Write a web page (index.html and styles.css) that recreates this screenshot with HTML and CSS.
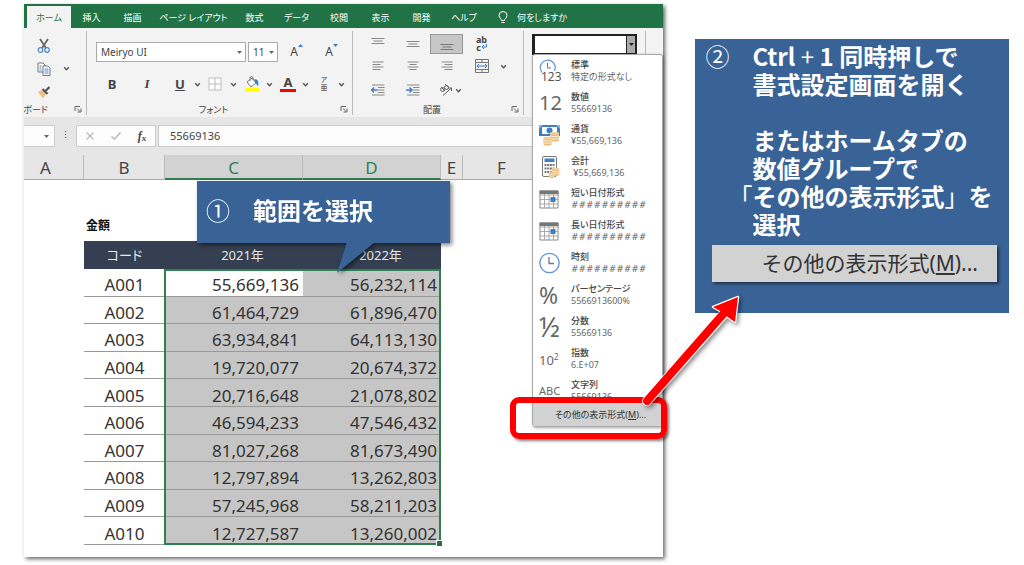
FILE: index.html
```
<!DOCTYPE html>
<html lang="ja">
<head>
<meta charset="utf-8">
<title>表示形式の設定</title>
<link rel="stylesheet" href="styles.css">
</head>
<body>
<svg width="0" height="0" class="defs" aria-hidden="true">
  <symbol id="chev" viewBox="0 0 6 6"><path d="M1 2l2 2 2-2" fill="none" stroke="#555" stroke-width="1.2"/></symbol>
  <symbol id="launch" viewBox="0 0 8 8"><path d="M1 6V1.5h5M3 3.500l3 3M7 3.500V7H3.500" fill="none" stroke="#666"/></symbol>
  <symbol id="coins" viewBox="0 0 12 12"><path d="M1 2v7c0 2 9 2 9 0V2z" fill="#e9be7c"/><path d="M1 4.500c1 1.500 8 1.500 9 0M1 7c1 1.500 8 1.500 9 0" stroke="#fff" fill="none" stroke-width=".8"/><ellipse cx="5.500" cy="2.200" rx="4.500" ry="1.500" fill="#f0cf9a"/></symbol>
  <symbol id="cal" viewBox="0 0 20 19"><path d="M1 1h18v17H1z" fill="#fff" stroke="#888"/><path d="M1 5h18M1 9.500h18M1 14h18M5.500 4v14M10 4v14M14.500 4v14" stroke="#aaa"/><path d="M.5.500h19V4H.5z" fill="#777"/><path d="M11.500 7h5v5h-5z" fill="#3f7fc1"/></symbol>
</svg>
<main class="slide">
  <section class="window">
    <nav class="tabs">
      <button class="tab tab-on">ホーム</button>
      <button class="tab">挿入</button>
      <button class="tab">描画</button>
      <button class="tab">ページ レイアウト</button>
      <button class="tab">数式</button>
      <button class="tab">データ</button>
      <button class="tab">校閲</button>
      <button class="tab">表示</button>
      <button class="tab">開発</button>
      <button class="tab">ヘルプ</button>
      <button class="tab tell"><svg width="10" height="13" viewBox="0 0 10 13"><path d="M3.500 9.500C3.500 7.500 1 7 1 4.500a4 4 0 0 1 8 0C9 7 6.500 7.500 6.500 9.500zM3.500 11.500h3" fill="none" stroke="#fff"/></svg>何をしますか</button>
    </nav>

    <div class="ribbon">
      <div class="group group-clip">
        <div class="clip-body">
          <button class="tool" aria-label="切り取り"><svg width="14" height="16" viewBox="0 0 14 16"><path d="M3 1l6 9M11 1L5 10" stroke="#666" stroke-width="1.800" fill="none"/><circle cx="3.500" cy="12" r="2.300" fill="none" stroke="#4a86c5" stroke-width="1.200"/><circle cx="10" cy="12" r="2.300" fill="none" stroke="#4a86c5" stroke-width="1.200"/></svg></button><span></span>
          <button class="tool" aria-label="コピー"><svg width="14" height="14" viewBox="0 0 14 14"><path d="M1 1h5l2 2v7H1z" fill="#fff" stroke="#777"/><path d="M6 4h5l2 2v7.500H6z" fill="#fff" stroke="#777"/><path d="M2.500 4h2M2.500 6h2M2.500 8h2M7.500 7h4M7.500 9h4M7.500 11h4" stroke="#4a86c5"/></svg></button><button class="tool" aria-label="コピーの種類"><svg width="7" height="7"><use href="#chev"/></svg></button>
          <button class="tool" aria-label="書式のコピー"><svg width="14" height="14" viewBox="0 0 14 14"><path d="M1 7l4-2 4 4-3 4.500z" fill="#edc184"/><path d="M5.500 4l5 5M8 6.500L12.500 2" stroke="#555" stroke-width="2.200"/></svg></button><span></span>
        </div>
        <footer class="group-foot"><span class="cut">プボード</span><button class="launch" aria-label="詳細"><svg width="8" height="8"><use href="#launch"/></svg></button></footer>
      </div>

      <div class="group group-font">
        <div class="font-body">
          <div class="font-row">
            <select class="combo combo-font" aria-label="フォント"><option>Meiryo UI</option></select>
            <select class="combo combo-size" aria-label="サイズ"><option>11</option></select>
            <button class="tool grow">A<svg width="5" height="4" viewBox="0 0 5 4"><path d="M0 3l2.500-3L5 3z" fill="#3f7fc1"/></svg></button>
            <button class="tool grow">A<svg width="5" height="4" viewBox="0 0 5 4"><path d="M0 0l2.500 3L5 0z" fill="#3f7fc1"/></svg></button>
          </div>
          <div class="font-row font-row2">
            <button class="tool letter">B</button>
            <button class="tool letter italic">I</button>
            <button class="tool split"><span class="letter under">U</span><svg width="7" height="7"><use href="#chev"/></svg></button>
            <button class="tool split" aria-label="罫線"><svg width="14" height="14" viewBox="0 0 14 14"><path d="M1 1h12v12H1zM7 1v12M1 7h12" fill="#fff" stroke="#bbb"/></svg><svg width="7" height="7"><use href="#chev"/></svg></button>
            <button class="tool split" aria-label="塗りつぶし"><svg width="16" height="16" viewBox="0 0 16 16"><path d="M3 6l5-4 4 5-5 4z" fill="#fff" stroke="#777"/><path d="M6 5V2a1.500 1.500 0 0 1 3 0v2" fill="none" stroke="#777"/><path d="M10 3.500c4-1 5 3 4 7l-2-3z" fill="#3f7fc1"/><path d="M1 12h14v3.500H1z" fill="#ff0"/></svg><svg width="7" height="7"><use href="#chev"/></svg></button>
            <button class="tool split" aria-label="フォントの色"><span class="letter color">A</span><svg width="7" height="7"><use href="#chev"/></svg></button>
            <button class="tool split" aria-label="ふりがな"><span class="ruby"><span>ア</span><span>亜</span></span><svg width="7" height="7"><use href="#chev"/></svg></button>
          </div>
        </div>
        <footer class="group-foot"><span class="group-name">フォント</span><button class="launch" aria-label="詳細"><svg width="8" height="8"><use href="#launch"/></svg></button></footer>
      </div>

      <div class="group group-align">
        <div class="align-body">
          <button class="tool" aria-label="上揃え"><svg width="14" height="14" viewBox="0 0 14 14"><path d="M.5 1.500h13M2.500 4h9M.5 6.500h13" stroke="#888"/></svg></button>
          <button class="tool" aria-label="上下中央"><svg width="14" height="14" viewBox="0 0 14 14"><path d="M.5 4.500h13M2.500 7h9M.5 9.500h13" stroke="#888"/></svg></button>
          <button class="tool pressed" aria-label="下揃え"><svg width="14" height="14" viewBox="0 0 14 14"><path d="M.5 7.500h13M2.500 10h9M.5 12.500h13" stroke="#777"/></svg></button>
          <button class="tool wrap" aria-label="折り返し"><span>ab</span><span>c<svg width="6" height="6" viewBox="0 0 6 6"><path d="M5.500 0v3H1M3 1L1 3l2 2" fill="none" stroke="#3f7fc1"/></svg></span></button><span></span>
          <button class="tool" aria-label="左揃え"><svg width="12" height="10" viewBox="0 0 12 10"><path d="M.5 1h11M.5 3.500h8M.5 6h11M.5 8.500h8" stroke="#888"/></svg></button>
          <button class="tool" aria-label="中央揃え"><svg width="12" height="10" viewBox="0 0 12 10"><path d="M.5 1h11M2.500 3.500h7M.5 6h11M2.500 8.500h7" stroke="#888"/></svg></button>
          <button class="tool" aria-label="右揃え"><svg width="12" height="10" viewBox="0 0 12 10"><path d="M.5 1h11M3.500 3.500h8M.5 6h11M3.500 8.500h8" stroke="#888"/></svg></button>
          <button class="tool" aria-label="セルを結合"><svg width="14" height="14" viewBox="0 0 14 14"><path d="M.5.500h13v13H.5zM.5 3.500h13M.5 10.500h13M7 .5v3M7 10.500v3" fill="none" stroke="#777"/><path d="M2 7h10M4 5L2 7l2 2M10 5l2 2-2 2" fill="none" stroke="#3f7fc1"/></svg></button>
          <button class="tool" aria-label="結合の種類"><svg width="7" height="7"><use href="#chev"/></svg></button>
          <button class="tool" aria-label="インデントを減らす"><svg width="14" height="12" viewBox="0 0 14 12"><path d="M1 1h12.500M7 3.500h6.500M7 6h6.500M7 8.500h6.500M1 11h12.500" stroke="#888"/><path d="M.5 6h6M3 3.500L.5 6 3 8.500" fill="none" stroke="#3f7fc1" stroke-width="1.500"/></svg></button>
          <button class="tool" aria-label="インデントを増やす"><svg width="14" height="12" viewBox="0 0 14 12"><path d="M1 1h12.500M7 3.500h6.500M7 6h6.500M7 8.500h6.500M1 11h12.500" stroke="#888"/><path d="M0 6h6M3.500 3.500L6 6 3.500 8.500" fill="none" stroke="#3f7fc1" stroke-width="1.500"/></svg></button>
          <button class="tool orient" aria-label="方向"><svg width="14" height="14" viewBox="0 0 14 14"><g fill="none" stroke="#666"><circle cx="3.500" cy="6.500" r="2"/><path d="M2 4l4 4M6 1l4 4"/><circle cx="7.500" cy="4.500" r="2"/><path d="M4 12.500L12.500 5M9.500 5h3v3"/></g></svg><svg width="7" height="7"><use href="#chev"/></svg></button>
        </div>
        <footer class="group-foot"><span class="group-name">配置</span><button class="launch" aria-label="詳細"><svg width="8" height="8"><use href="#launch"/></svg></button></footer>
      </div>

      <div class="group group-number">
        <div class="format-box"><input class="format-input" type="text" aria-label="表示形式"><button class="format-arrow" aria-label="一覧を開く"></button></div>
        <div class="menu">
          <ul class="menu-list">
            <li class="item"><svg width="22" height="24" viewBox="0 0 22 24"><path d="M3 13.500A7.500 7.500 0 1 1 15.500 12" fill="none" stroke="#5b94cf" stroke-width="1.200"/><path d="M8.500 4v5H12" fill="none" stroke="#777"/><text x="2" y="22" class="t123">123</text></svg><span><b>標準</b>特定の形式なし</span></li>
            <li class="item"><span class="glyph">12</span><span><b>数値</b>55669136</span></li>
            <li class="item"><svg width="22" height="22" viewBox="0 0 22 22"><path d="M0 1h21v11H0z" fill="#3f7fc1"/><path d="M3 3h15v7H3z" fill="#fff"/><path d="M0 1h4L0 5zM21 1h-4l4 4z" fill="#8fb5de"/><circle cx="10.500" cy="6.500" r="3" fill="#3f7fc1"/><use href="#coins" x="10" y="7" width="12" height="12"/><use href="#coins" x="3" y="12" width="12" height="11"/></svg><span><b>通貨</b>¥55,669,136</span></li>
            <li class="item"><svg width="22" height="24" viewBox="0 0 22 24"><rect x="3.500" y="1.500" width="14" height="20" rx="1.500" fill="#fff" stroke="#777"/><path d="M5.500 3.500h10V7h-10z" fill="#3f7fc1"/><path d="M5.500 10h10M5.500 13.500h10M5.500 17h10" stroke="#777" stroke-width="2" stroke-dasharray="2 .7"/><use href="#coins" x="12" y="12" width="10" height="10"/><use href="#coins" x="8" y="16" width="10" height="8"/></svg><span><b>会計</b>&nbsp;¥55,669,136</span></li>
            <li class="item"><svg width="20" height="19"><use href="#cal"/></svg><span><b>短い日付形式</b><i>##########</i></span></li>
            <li class="item"><svg width="20" height="19"><use href="#cal"/></svg><span><b>長い日付形式</b><i>##########</i></span></li>
            <li class="item"><svg width="22" height="22" viewBox="0 0 22 22"><circle cx="10.500" cy="11" r="9.700" fill="#fff" stroke="#5b94cf" stroke-width="1.300"/><path d="M10 5v6.500h5" fill="none" stroke="#777" stroke-width="1.300"/></svg><span><b>時刻</b><i>##########</i></span></li>
            <li class="item"><span class="glyph glyph-pc">%</span><span><b>パーセンテージ</b>5566913600%</span></li>
            <li class="item"><span class="glyph glyph-half">½</span><span><b>分数</b>55669136</span></li>
            <li class="item"><span class="glyph glyph-exp">10<sup>2</sup></span><span><b>指数</b>6.E+07</span></li>
            <li class="item"><span class="glyph glyph-abc">ABC</span><span><b>文字列</b>55669136</span></li>
          </ul>
          <button class="menu-more">その他の表示形式(<u>M</u>)...</button>
          <div class="highlight"></div>
        </div>
      </div>
    </div>

    <div class="formula">
      <button class="name-box" aria-label="名前ボックス"></button>
      <span class="dots">⋮</span>
      <div class="fx-box">
        <button class="tool" aria-label="キャンセル"><svg width="8" height="8" viewBox="0 0 8 8"><path d="M.5.500l7 7M7.500.500l-7 7" stroke="#bbb" stroke-width="1.300"/></svg></button>
        <button class="tool" aria-label="入力"><svg width="10" height="8" viewBox="0 0 10 8"><path d="M.5 4.500l3 2.500 6-6.500" fill="none" stroke="#bbb" stroke-width="1.600"/></svg></button>
        <button class="tool fx">f<small>x</small></button>
      </div>
      <input class="formula-input" type="text" value="55669136" aria-label="数式バー">
    </div>

    <div class="cols"><span>A</span><span>B</span><span class="col-on">C</span><span class="col-on">D</span><span>E</span><span>F</span><span></span></div>

    <div class="sheet">
      <h2 class="sheet-title">金額</h2>
      <div class="range">
        <table class="data">
          <thead><tr><th class="c-code">コード</th><th>2021年</th><th>2022年</th></tr></thead>
          <tbody>
            <tr><td>A001</td><td class="active">55,669,136</td><td>56,232,114</td></tr>
            <tr><td>A002</td><td>61,464,729</td><td>61,896,470</td></tr>
            <tr><td>A003</td><td>63,934,841</td><td>64,113,130</td></tr>
            <tr><td>A004</td><td>19,720,077</td><td>20,674,372</td></tr>
            <tr><td>A005</td><td>20,716,648</td><td>21,078,802</td></tr>
            <tr><td>A006</td><td>46,594,233</td><td>47,546,432</td></tr>
            <tr><td>A007</td><td>81,027,268</td><td>81,673,490</td></tr>
            <tr><td>A008</td><td>12,797,894</td><td>13,262,803</td></tr>
            <tr><td>A009</td><td>57,245,968</td><td>58,211,203</td></tr>
            <tr><td>A010</td><td>12,727,587</td><td>13,260,002</td></tr>
          </tbody>
        </table>
        <div class="selection"></div>
      </div>
      <div class="callout"><span class="num">①</span><span>範囲を選択</span><svg class="tail" width="38" height="32" viewBox="0 0 38 32"><path d="M10 0h28L0 31z" fill="#396397"/></svg></div>
    </div>
  </section>

  <aside class="panel">
    <div class="step">
      <span class="num">②</span>
      <div>
        <p>Ctrl <span class="plus">+</span> 1 同時押しで<br>書式設定画面を開く</p>
        <p>またはホームタブの<br>数値グループで<br><span class="hang">「</span>その他の表示形式<span class="num">」</span>を<br>選択</p>
      </div>
    </div>
    <div class="sample">その他の表示形式(<u>M</u>)...</div>
  </aside>

  <svg class="arrow" width="110" height="126" viewBox="0 0 110 126"><g stroke="#fff" stroke-width="2.500" stroke-linejoin="round"><path d="M9 111L86 24" stroke-width="10" stroke-linecap="round"/><path d="M100 7L75 17 82 21 91 28 97 32z" fill="#f00"/></g><path d="M9 111L87 22" stroke="#f00" stroke-width="8" stroke-linecap="round"/><path d="M100 7L75 17 82 21 91 28 97 32z" fill="#f00"/></svg>
</main>
</body>
</html>
```

FILE: styles.css
```
* { box-sizing: border-box; }
body { margin: 0; background: #fff; color: #444; font-family: "Noto Sans", "Noto Sans CJK JP", sans-serif; font-size: 9px; }
button, input, select { font: inherit; color: inherit; margin: 0; padding: 0; border: 0; border-radius: 0; background: none; outline: 0; }
svg { display: block; flex: none; }
.defs { position: absolute; }

.slide { position: relative; display: grid; grid-template-columns: 640fr 313fr; gap: 32px; align-items: start; padding: 4px 15px 8px 24px; }
.window { display: flex; flex-direction: column; min-height: 553px; background: #fff; box-shadow: 2px 2px 4px rgba(0,0,0,.6); }

/* tabs */
.tabs { display: grid; grid-template-columns: 44px 41px 41px 81px 41px 43px 42px 41px 41px 44px 1fr; height: 24px; padding: 2px 0 0 3px; background: #217346; font-feature-settings: "palt"; }
.tab { color: #fff; white-space: nowrap; }
.tab-on { background: #f3f3f3; color: #217346; }
.tell { display: flex; align-items: center; gap: 9px; padding-left: 12px; }

/* ribbon */
.ribbon { display: flex; height: 89px; background: #f3f3f3; }
.group { position: relative; display: flex; flex-direction: column; margin: 3px 0 2px; border-right: 1px solid #bbb; }
.group-clip { width: 63px; }
.group-font { width: 266px; }
.group-align { width: 171px; }
.group-number { width: 122px; }
.group-foot { display: flex; align-items: center; justify-content: flex-end; height: 12px; margin-top: auto; padding-right: 4px; font-feature-settings: "palt"; }
.group-name { flex: 1; text-align: center; }
.cut { flex: 1; direction: rtl; width: 0; overflow: hidden; white-space: nowrap; padding-right: 26px; }
.tool { display: flex; align-items: center; justify-content: center; }
.clip-body { display: grid; grid-template: repeat(3, 23px) / 40px 4px; justify-content: start; padding: 3px 0 0; }
.font-body { padding: 11px 0 0 9px; }
.font-row { display: flex; align-items: center; gap: 2px; height: 20px; }
.font-row2 { margin-top: 12px; padding-left: 2px; gap: 7px; }
.combo { appearance: none; height: 20px; padding: 0 4px; border: 1px solid #ababab; background: #fff url("data:image/svg+xml,%3Csvg xmlns='http://www.w3.org/2000/svg' width='5' height='3'%3E%3Cpath d='M0 0h5L2.5 3z' fill='%23666'/%3E%3C/svg%3E") no-repeat right 3px center; font-size: 10px; }
.combo-font { width: 150px; }
.combo-size { width: 30px; }
.grow { width: 33px; align-items: flex-start; font-size: 12px; line-height: 20px; }
.grow svg { margin-top: 2px; }
.letter { width: 28px; font-size: 13px; font-weight: 700; line-height: 16px; }
.italic { font-family: "Liberation Serif", serif; font-style: italic; }
.italic + .split { margin-left: 4px; }
.split { width: 29px; justify-content: space-between; }
.split .letter { width: 16px; }
.under { text-decoration: underline; }
.color { border-bottom: 3px solid #f00; line-height: 13px; }
.ruby { display: flex; flex-direction: column; width: 16px; font-size: 7px; line-height: 8px; }
.align-body { display: grid; grid-template: 20px 24px 24px / 34px 35px 33px 37px 6px; padding: 3px 0 0 8px; }
.pressed { border: 1px solid #999; background: #c6c6c6; }
.wrap { flex-direction: column; font-size: 9px; font-weight: 700; line-height: 8px; }
.wrap span { display: flex; }
.orient { gap: 2px; padding-left: 7px; }

/* number format */
.format-box { display: flex; width: 105px; height: 21px; margin: 3px 0 0 8px; border: 2px solid #222; background: #fff; }
.format-input { flex: 1; min-width: 0; border-left: 1px solid #222; }
.format-arrow { width: 9px; background: #aaa url("data:image/svg+xml,%3Csvg xmlns='http://www.w3.org/2000/svg' width='5' height='3'%3E%3Cpath d='M0 0h5L2.5 3z' fill='%23222'/%3E%3C/svg%3E") no-repeat center; border-left: 1px solid #222; }
.menu { position: absolute; top: 23px; left: 8px; z-index: 2; width: 131px; border: 1px solid #aaa; border-radius: 3px; background: #fff; box-shadow: 1px 1px 3px rgba(0,0,0,.35); }
.menu-list { height: 347px; margin: 0; padding: 0; overflow: hidden; list-style: none; font-feature-settings: "palt"; }
.item { display: grid; grid-template-columns: 22px 1fr; gap: 10px; align-items: center; height: 32px; padding-left: 6px; color: #666; line-height: 12px; white-space: nowrap; }
.item b { display: block; color: #444; font-weight: 500; }
.item i { font-family: "DejaVu Sans", sans-serif; font-size: 9px; }
.glyph { font-size: 20px; line-height: 24px; }
.glyph-pc { font-size: 23px; }
.glyph-half { font-size: 27px; }
.glyph-exp { font-size: 13px; }
.glyph-exp sup { font-size: 8px; }
.glyph-abc { font-size: 11px; }
.t123 { font-size: 12px; fill: #555; }
.menu-more { width: 100%; height: 24px; padding-left: 6px; background: #d2d2d2; color: #333; font-feature-settings: "palt"; }
.highlight { position: absolute; top: 342px; left: -23px; width: 157px; height: 42px; border: 6px solid #f00; border-radius: 9px; box-shadow: 2px 2px 3px rgba(0,0,0,.5); }

/* formula bar */
.formula { display: flex; height: 38px; padding: 8px 0; background: #e6e6e6; }
.name-box { width: 31px; border: 1px solid #ccc; border-left: 0; background: #fdfdfd url("data:image/svg+xml,%3Csvg xmlns='http://www.w3.org/2000/svg' width='5' height='3'%3E%3Cpath d='M0 0h5L2.5 3z' fill='%23666'/%3E%3C/svg%3E") no-repeat right 5px center; }
.dots { width: 21px; text-align: center; line-height: 20px; }
.fx-box { display: grid; grid-template-columns: 1fr 1fr 1fr; width: 80px; margin-right: 2px; border: 1px solid #ccc; background: #fdfdfd; }
.fx { font: italic 700 12px "Liberation Serif", serif; }
.fx small { font-size: 9px; padding-top: 3px; }
.formula-input { flex: 1; min-width: 0; padding: 0 0 2px 11px; border: 1px solid #ccc; border-right: 0; background: #fdfdfd; font-size: 11px; }

/* column headings */
.cols { display: grid; grid-template-columns: 60px 81px 138px 138px 22px 78px 1fr; height: 25px; border-bottom: 1px solid #aaa; background: #e6e6e6; font-size: 17px; line-height: 25px; text-align: center; color: #444; }
.cols span { border-right: 1px solid #bbb; }
.cols span:first-child { padding-right: 16px; }
.cols .col-on { height: 25px; border-bottom: 2px solid #2f8050; background: #d2d2d2; color: #337d55; }

/* worksheet */
.sheet { position: relative; padding: 36px 0 12px 60px; }
.sheet-title { margin: 0 0 5px 2px; color: #111; font-size: 12px; line-height: 20px; font-weight: 700; }
.range { position: relative; width: 357px; }
.data { width: 100%; height: 304px; border-collapse: collapse; table-layout: fixed; font-size: 17px; line-height: 20px; color: #333; }
.data th { height: 28px; padding: 0 0 0 17px; background: #343f51; color: #e6e6e6; font-size: 13px; font-weight: 400; }
.data .c-code { width: 81px; padding: 0; font-feature-settings: "palt"; }
.data td { padding: 6px 4px 0 0; border-bottom: 1px solid #999; background: #c6c6c6; text-align: right; }
.data td:first-child { padding: 6px 0 0; background: #fff; text-align: center; }
.data td.active { background: #fff; }
.selection { position: absolute; inset: 28px 0 0 80px; border: 2px solid #2f8050; }
.selection::after { content: ""; position: absolute; right: -3px; bottom: -3px; width: 5px; height: 5px; border: 1px solid #fff; border-width: 1px 0 0 1px; background: #217346; }

/* callouts */
.callout { position: absolute; top: 1px; left: 173px; display: flex; gap: 23px; width: 253px; height: 62px; padding-left: 9px; background: #396397; color: #fff; font: 700 24px/58px "Noto Sans CJK JP", sans-serif; filter: drop-shadow(2px 2px 2px rgba(0,0,0,.5)); }
.tail { position: absolute; top: 61px; left: 140px; }
.num { font-weight: 400; }
.panel { margin-top: 35px; padding: 3px 12px 31px 10px; background: #396397; color: #fff; }
.step { display: flex; gap: 23px; font: 700 24px/28px "Noto Sans CJK JP", sans-serif; white-space: nowrap; }
.step p { margin: 0 0 28px; }
.step p:last-child { margin: 0; }
.plus { font-weight: 400; }
.hang { margin-left: -24px; font-weight: 400; }
.sample { margin: 7px 0 0 7px; padding: 0 19px 0 49px; background: #d2d2d2; box-shadow: 2px 2px 3px rgba(0,0,0,.5); color: #333; font-size: 21px; line-height: 37px; white-space: nowrap; }
.arrow { position: absolute; top: 290px; left: 638px; z-index: 3; fill: none; filter: drop-shadow(2px 2px 2px rgba(0,0,0,.45)); }
```
